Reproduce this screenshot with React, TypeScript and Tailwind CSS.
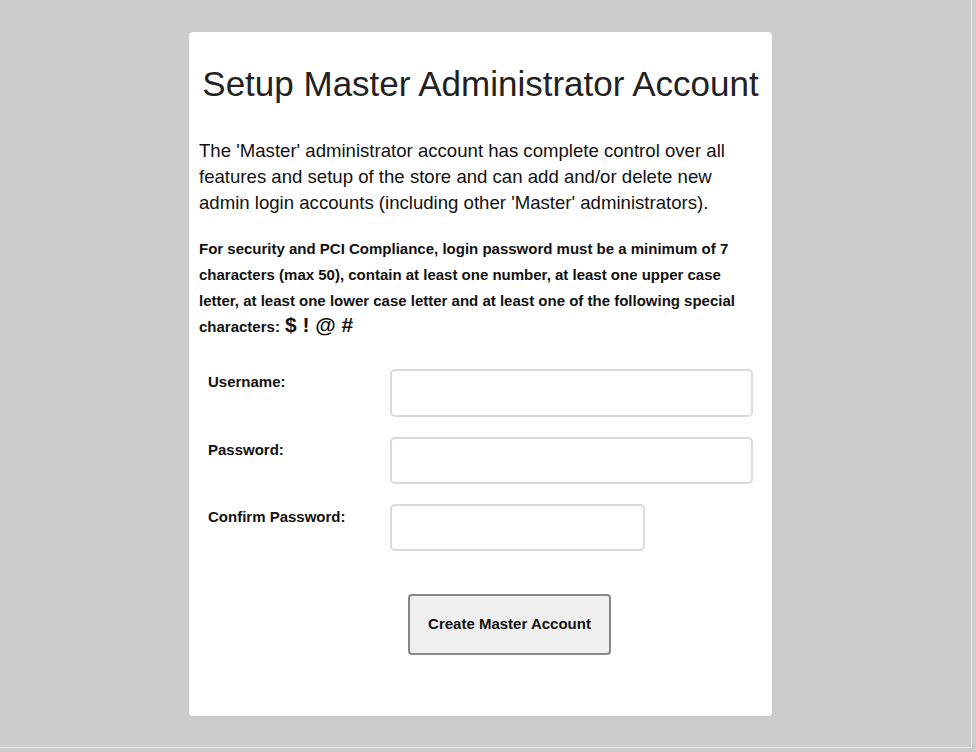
export default function App() {
  return (
    <div className="w-[976px] h-[752px] bg-[#cccccc] overflow-hidden" style={{ fontFamily: '"Liberation Sans", Arial, sans-serif' }}>
      <div className="w-[972px] h-[748px] border-r border-b border-[#e6e6e6] pt-[32px] pl-[189px]">
        {/* Card */}
        <div className="w-[583px] h-[684px] bg-white rounded-[4px] px-[10px] text-[#111]">
          <h1 className="pt-[30px] text-center text-[35px] leading-[44px] whitespace-nowrap text-[#222]">
            Setup Master Administrator Account
          </h1>

          <p className="mt-[32px] w-[540px] text-[18.6px] leading-[26px] text-[#111]">
            The 'Master' administrator account has complete control over all features and setup of the store and can add and/or delete new admin login accounts (including other 'Master' administrators).
          </p>

          <p className="mt-[20px] text-[15px] leading-[26px] font-bold text-[#111] pr-[20px]">
            For security and PCI Compliance, login password must be a minimum of 7 characters (max 50), contain at least one number, at least one upper case letter, at least one lower case letter and at least one of the following special characters:
            <span className="inline-block ml-[5px] text-[21px] leading-[22px]">$ ! @ #</span>
          </p>

          {/* Form */}
          <div className="mt-[29px] flex flex-col gap-[20px]">
            <div className="flex">
              <label className="w-[191px] pl-[9px] pt-[2px] text-[15px] font-bold">Username:</label>
              <input type="text" className="w-[363px] h-[48px] border-2 border-[#dadada] rounded-[5px] bg-white" />
            </div>
            <div className="flex">
              <label className="w-[191px] pl-[9px] pt-[2px] text-[15px] font-bold">Password:</label>
              <input type="password" className="w-[363px] h-[47px] border-2 border-[#dadada] rounded-[5px] bg-white" />
            </div>
            <div className="flex">
              <label className="w-[191px] pl-[9px] pt-[2px] text-[15px] font-bold">Confirm Password:</label>
              <input type="password" className="w-[255px] h-[47px] border-2 border-[#dadada] rounded-[5px] bg-white" />
            </div>
          </div>

          <div className="mt-[43px] pl-[209px]">
            <button className="w-[203px] h-[61px] bg-[#efefef] border-2 border-[#888888] rounded-[4px] text-[15px] font-bold text-[#111]">
              Create Master Account
            </button>
          </div>
        </div>
      </div>
    </div>
  );
}
